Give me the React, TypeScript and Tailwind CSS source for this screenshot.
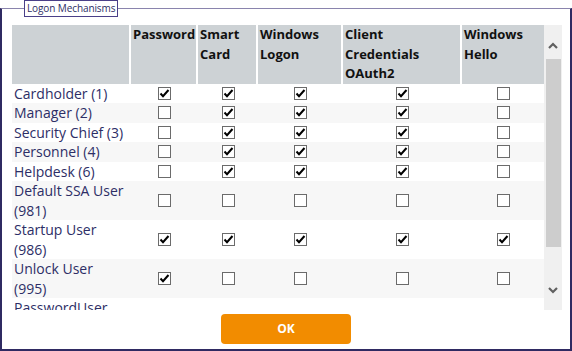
import React from "react";

type Row = { name: React.ReactNode; vals: boolean[] };

const rows: Row[] = [
  { name: "Cardholder (1)", vals: [true, true, true, true, false] },
  { name: "Manager (2)", vals: [false, true, true, true, false] },
  { name: "Security Chief (3)", vals: [false, true, true, true, false] },
  { name: "Personnel (4)", vals: [false, true, true, true, false] },
  { name: "Helpdesk (6)", vals: [false, true, true, true, false] },
  { name: <>Default SSA User<br />(981)</>, vals: [false, false, false, false, false] },
  { name: <>Startup User<br />(986)</>, vals: [true, true, true, true, true] },
  { name: <>Unlock User<br />(995)</>, vals: [true, false, false, false, false] },
  { name: <>PasswordUser<br />(997)</>, vals: [true, false, false, false, false] },
];

const colW = ["w-[119px]", "w-[67px]", "w-[60px]", "w-[85px]", "w-[119px]", "w-[82px]"];

function Check({ on }: { on: boolean }) {
  return (
    <span className="inline-flex w-[13px] h-[13px] border border-[#6b6b6b] bg-white items-center justify-center align-middle">
      {on && (
        <svg width="11" height="11" viewBox="0 0 11 11">
          <polyline points="1.5,5.5 4,8.2 9.5,2" fill="none" stroke="#000" strokeWidth="2" />
        </svg>
      )}
    </span>
  );
}

function Chevron({ up }: { up?: boolean }) {
  return (
    <svg width="10" height="7" viewBox="0 0 10 7">
      <polyline
        points={up ? "1,6 5,2 9,6" : "1,1 5,5 9,1"}
        fill="none"
        stroke="#606060"
        strokeWidth="2.2"
      />
    </svg>
  );
}

export default function App() {
  const headers: React.ReactNode[] = [
    "",
    "Password",
    <>Smart<br />Card</>,
    <>Windows<br />Logon</>,
    <>Client<br />Credentials<br />OAuth2</>,
    <>Windows<br />Hello</>,
  ];
  return (
    <div className="w-[572px] h-[351px] bg-white" style={{ fontFamily: '"Open Sans", "Noto Sans", sans-serif' }}>
      <fieldset className="w-[572px] h-[351px] border-t border-t-[#8a84ad] border-l-2 border-r-2 border-b-2 border-l-[#2f2a62] border-r-[#2f2a62] border-b-[#2f2a62] pl-[10px] pr-[8px] pt-[8px] flex flex-col">
        <legend className="ml-[12px] border border-[#4a3f88] px-[2px] h-[17px] text-[10px] leading-[15px] tracking-[-0.1px] text-[#2d2e66]">
          Logon Mechanisms
        </legend>
        <div className="flex h-[285px] w-[550px]">
          <div className="w-[532px] h-[285px] overflow-hidden text-[13px] leading-[19.5px]">
            <div className="flex bg-[#cdd2d5] h-[58.5px]">
              {headers.map((h, i) => (
                <div
                  key={i}
                  className={`${colW[i]} shrink-0 pl-[2px] font-bold text-[#111] whitespace-nowrap ${i < 5 ? "border-r-2 border-white" : ""}`}
                >
                  {h}
                </div>
              ))}
            </div>
            {rows.map((r, ri) => (
              <div key={ri} className={`flex items-center ${ri % 2 === 1 ? "bg-[#f7f7f7]" : "bg-white"}`}>
                <div className={`${colW[0]} shrink-0 pl-[2px] text-[14px] text-[#2d2e66] whitespace-nowrap`}>{r.name}</div>
                {r.vals.map((v, vi) => (
                  <div key={vi} className={`${colW[vi + 1]} shrink-0 flex justify-center`}>
                    <Check on={v} />
                  </div>
                ))}
              </div>
            ))}
          </div>
          <div className="w-[18px] h-[285px] bg-[#f0f0f0] flex flex-col items-center">
            <div className="h-[34px] w-full flex items-center justify-center pt-[6px]">
              <Chevron up />
            </div>
            <div className="w-[15px] h-[188px] bg-[#cdcdcd]" />
            <div className="flex-1 w-full flex items-center justify-center pt-[24px]">
              <Chevron />
            </div>
          </div>
        </div>
        <div className="flex justify-center pt-[4px] pr-[2px]">
          <button className="w-[130px] h-[30px] rounded-[4px] bg-[#f28c00] text-white font-bold text-[12px]">
            OK
          </button>
        </div>
      </fieldset>
    </div>
  );
}
